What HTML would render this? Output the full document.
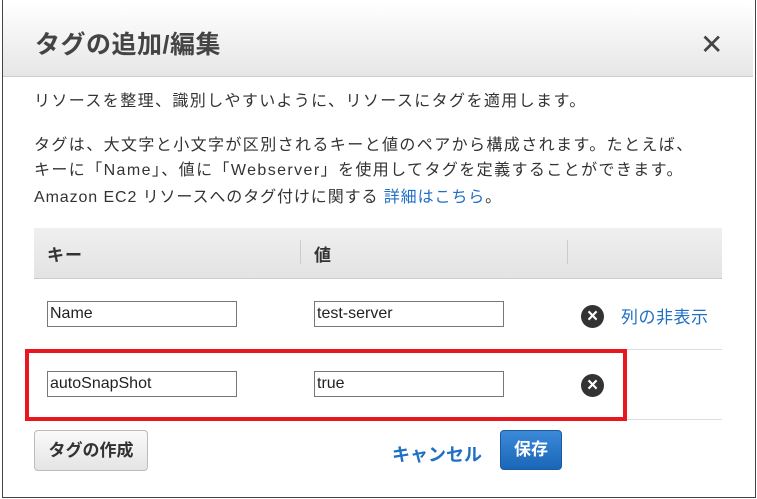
<!DOCTYPE html>
<html><head><meta charset="utf-8"><style>
*{margin:0;padding:0;box-sizing:border-box}
body{width:757px;height:499px;background:#fff;font-family:"Liberation Sans","Noto Sans CJK JP",sans-serif;color:#333;position:relative;overflow:hidden}
.frame{position:absolute;left:2px;top:0;width:754px;height:498px;border:1px solid #444;border-top:none}
.hdr{position:absolute;left:3px;top:3px;width:750px;height:74px;background:linear-gradient(#fff,#e6e6e6);border-bottom:1px solid #ccc;border-radius:5px 5px 0 0}
.title{position:absolute;left:35px;top:25px;font-size:25px;font-weight:bold;color:#444;letter-spacing:0.5px}
.x{position:absolute;left:700px;top:28px;font-size:28px;color:#444}
.t{position:absolute;left:34px;font-size:16px;color:#333;white-space:nowrap;letter-spacing:1.4px}
a{color:#1f6fc5;text-decoration:none}
.th{position:absolute;left:34px;top:228px;width:688px;height:51px;background:linear-gradient(#efefef,#e3e3e3);border-bottom:1px solid #ccc}
.th span{position:absolute;top:13px;font-size:17px;font-weight:bold;color:#333;letter-spacing:1px}
.sep{position:absolute;top:12px;width:1px;height:24px;background:#ccc}
.line{position:absolute;left:34px;width:688px;height:1px;background:#ddd}
.in{position:absolute;width:190px;height:26px;border:1px solid #777;font-size:16px;padding:3px 2px;color:#222;background:#fff}
.ic{position:absolute;width:23px;height:23px;border-radius:50%;background:#333;color:#fff;font-size:19px;font-weight:bold;text-align:center;line-height:23px}
.red{position:absolute;left:25px;top:349px;width:602px;height:72px;border:4px solid #e8161e}
.btn1{position:absolute;left:34px;top:430px;width:114px;height:41px;border:1px solid #bbb;border-radius:4px;background:linear-gradient(#fafafa,#e4e4e4);font-size:17px;font-weight:bold;text-align:center;line-height:39px;color:#333}
.btn2{position:absolute;left:500px;top:430px;width:62px;height:40px;border:1px solid #1a5aa0;border-radius:4px;background:linear-gradient(#3b8ad8,#1a66b8);font-size:17px;font-weight:bold;color:#fff;text-align:center;line-height:38px}
</style></head><body>
<div class="frame"></div>
<div class="hdr"></div>
<div class="title">タグの追加/編集</div>
<div class="x">✕</div>
<div class="t" style="top:87px">リソースを整理、識別しやすいように、リソースにタグを適用します。</div>
<div class="t" style="top:131px">タグは、大文字と小文字が区別されるキーと値のペアから構成されます。たとえば、</div>
<div class="t" style="top:156px">キーに「Name」、値に「Webserver」を使用してタグを定義することができます。</div>
<div class="t" style="top:183px;letter-spacing:0.9px">Amazon EC2 リソースへのタグ付けに関する <a>詳細はこちら</a>。</div>
<div class="th"><span style="left:13px">キー</span><div class="sep" style="left:266px"></div><span style="left:280px">値</span><div class="sep" style="left:533px"></div></div>
<div class="line" style="top:349px"></div>
<div class="line" style="top:419px"></div>
<div class="in" style="left:47px;top:301px">Name</div>
<div class="in" style="left:314px;top:301px">test-server</div>
<div class="ic" style="left:581px;top:305px">×</div>
<div class="t" style="left:621px;top:303px;font-size:17px;letter-spacing:0.5px"><a>列の非表示</a></div>
<div class="in" style="left:47px;top:371px">autoSnapShot</div>
<div class="in" style="left:314px;top:371px">true</div>
<div class="ic" style="left:581px;top:374px">×</div>
<div class="red"></div>
<div class="btn1">タグの作成</div>
<div class="t" style="left:392px;top:441px;font-weight:bold;font-size:18px;letter-spacing:0"><a>キャンセル</a></div>
<div class="btn2">保存</div>
</body></html>
